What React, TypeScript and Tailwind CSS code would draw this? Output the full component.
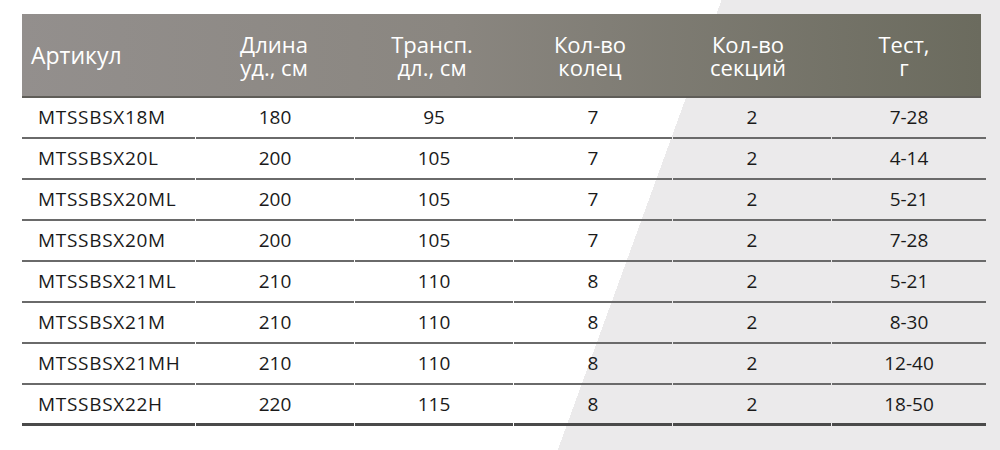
type Rod = {
  sku: string
  length: number
  transport: number
  rings: number
  sections: number
  test: string
}

const rods: Rod[] = [
  { sku: 'MTSSBSX18M', length: 180, transport: 95, rings: 7, sections: 2, test: '7-28' },
  { sku: 'MTSSBSX20L', length: 200, transport: 105, rings: 7, sections: 2, test: '4-14' },
  { sku: 'MTSSBSX20ML', length: 200, transport: 105, rings: 7, sections: 2, test: '5-21' },
  { sku: 'MTSSBSX20M', length: 200, transport: 105, rings: 7, sections: 2, test: '7-28' },
  { sku: 'MTSSBSX21ML', length: 210, transport: 110, rings: 8, sections: 2, test: '5-21' },
  { sku: 'MTSSBSX21M', length: 210, transport: 110, rings: 8, sections: 2, test: '8-30' },
  { sku: 'MTSSBSX21MH', length: 210, transport: 110, rings: 8, sections: 2, test: '12-40' },
  { sku: 'MTSSBSX22H', length: 220, transport: 115, rings: 8, sections: 2, test: '18-50' },
]

const headers = [
  ['Длина', 'уд., см'],
  ['Трансп.', 'дл., см'],
  ['Кол-во', 'колец'],
  ['Кол-во', 'секций'],
  ['Тест,', 'г'],
]

const cols = 'grid grid-cols-[173px_158px_158px_158px_158px_154px]'

export default function App() {
  return (
    <div className="h-[450px] w-[1000px] overflow-hidden bg-[linear-gradient(110deg,#ffffff_678px,#ebeaeb_678px)] pl-[22px] pt-[14px] font-['Open_Sans',sans-serif]">
      <div className="w-[959px]">
        <div
          className={`${cols} h-[84px] border-b-2 border-[#5f5d58] bg-[linear-gradient(90deg,#938f8d_0%,#8a8680_45%,#6b6b5e_100%)] text-[22px] leading-[23px] text-white`}
        >
          <div className="flex items-center pl-[9px] text-[23px]">Артикул</div>
          {headers.map(([a, b], index) => (
            <div key={index} className="flex items-center justify-center pt-[2px] text-center">
              <p>
                {a}
                <br />
                {b}
              </p>
            </div>
          ))}
        </div>

        {rods.map((rod, index) => (
          <div
            key={rod.sku}
            className={`${cols} h-[41px] gap-x-[1px] text-[19px] text-[#1a1a1a]`}
          >
            {[rod.sku, rod.length, rod.transport, rod.rings, rod.sections, rod.test].map(
              (value, i) => (
                <div
                  key={i}
                  className={[
                    'flex items-center',
                    i === 0 ? 'pl-[16px] tracking-[0.7px]' : 'justify-center',
                    index === rods.length - 1
                      ? 'border-b-[3px] border-[#4a4a4a]'
                      : 'border-b-2 border-[#6a6a6a]',
                  ].join(' ')}
                >
                  {value}
                </div>
              ),
            )}
          </div>
        ))}
      </div>
    </div>
  )
}
